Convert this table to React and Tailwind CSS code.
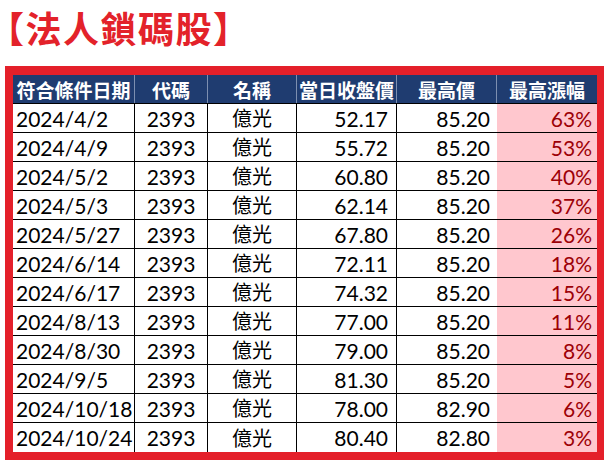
import React from "react";

const rows = [
  ["2024/4/2", "2393", "億光", "52.17", "85.20", "63%"],
  ["2024/4/9", "2393", "億光", "55.72", "85.20", "53%"],
  ["2024/5/2", "2393", "億光", "60.80", "85.20", "40%"],
  ["2024/5/3", "2393", "億光", "62.14", "85.20", "37%"],
  ["2024/5/27", "2393", "億光", "67.80", "85.20", "26%"],
  ["2024/6/14", "2393", "億光", "72.11", "85.20", "18%"],
  ["2024/6/17", "2393", "億光", "74.32", "85.20", "15%"],
  ["2024/8/13", "2393", "億光", "77.00", "85.20", "11%"],
  ["2024/8/30", "2393", "億光", "79.00", "85.20", "8%"],
  ["2024/9/5", "2393", "億光", "81.30", "85.20", "5%"],
  ["2024/10/18", "2393", "億光", "78.00", "82.90", "6%"],
  ["2024/10/24", "2393", "億光", "80.40", "82.80", "3%"],
];

const headers = ["符合條件日期", "代碼", "名稱", "當日收盤價", "最高價", "最高漲幅"];
const widths = ["w-[122px]", "w-[73px]", "w-[89px]", "w-[100px]", "w-[100px]", "w-[100px]"];

const App = () => {
  return (
    <div className="w-[609px] h-[465px] bg-white overflow-hidden">
      <div className="h-[66px] pt-[7px] pl-[6px]">
        <h1
          className="text-[36px] leading-[40px] font-bold text-[#e3222a] tracking-[1.5px] [font-feature-settings:'halt']"
          style={{ fontFamily: "'Noto Sans CJK TC', sans-serif" }}
        >
          【法人鎖碼股】
        </h1>
      </div>
      <div className="ml-[5px] w-[599px] border-t-[9px] border-l-[8px] border-r-[7px] border-b-[8px] border-[#e4202a]">
        <div
          className="flex h-[29px] bg-[#1f3c70] text-white text-[19px] font-bold border-b border-black"
          style={{ fontFamily: "'Noto Sans CJK TC', sans-serif" }}
        >
          {headers.map((h, i) => (
            <div
              key={h}
              className={`${widths[i]} flex items-center justify-center leading-none ${
                i < 5 ? "border-r border-[#7d8fb0]" : ""
              }`}
            >
              {h}
            </div>
          ))}
        </div>
        {rows.map((r, idx) => (
          <div
            key={idx}
            className={`flex h-[29px] text-[21px] text-black ${idx < 11 ? "border-b border-black" : ""}`}
            style={{ fontFamily: "Lato, 'Noto Sans CJK TC', sans-serif" }}
          >
            <div className="w-[122px] border-r border-black flex items-center pl-[3px] leading-none">{r[0]}</div>
            <div className="w-[73px] border-r border-black flex items-center justify-center leading-none">{r[1]}</div>
            <div
              className="w-[89px] border-r border-black flex items-center justify-center leading-none text-[20px]"
              style={{ fontFamily: "'Noto Sans CJK TC', sans-serif" }}
            >
              {r[2]}
            </div>
            <div className="w-[100px] border-r border-black flex items-center justify-end pr-[8px] leading-none">{r[3]}</div>
            <div className="w-[100px] flex items-center justify-end pr-[7px] leading-none">{r[4]}</div>
            <div className="w-[100px] bg-[#ffc7ce] text-[#9c0006] flex items-center justify-end pr-[5px] leading-none">
              {r[5]}
            </div>
          </div>
        ))}
      </div>
    </div>
  );
};

export default App;
